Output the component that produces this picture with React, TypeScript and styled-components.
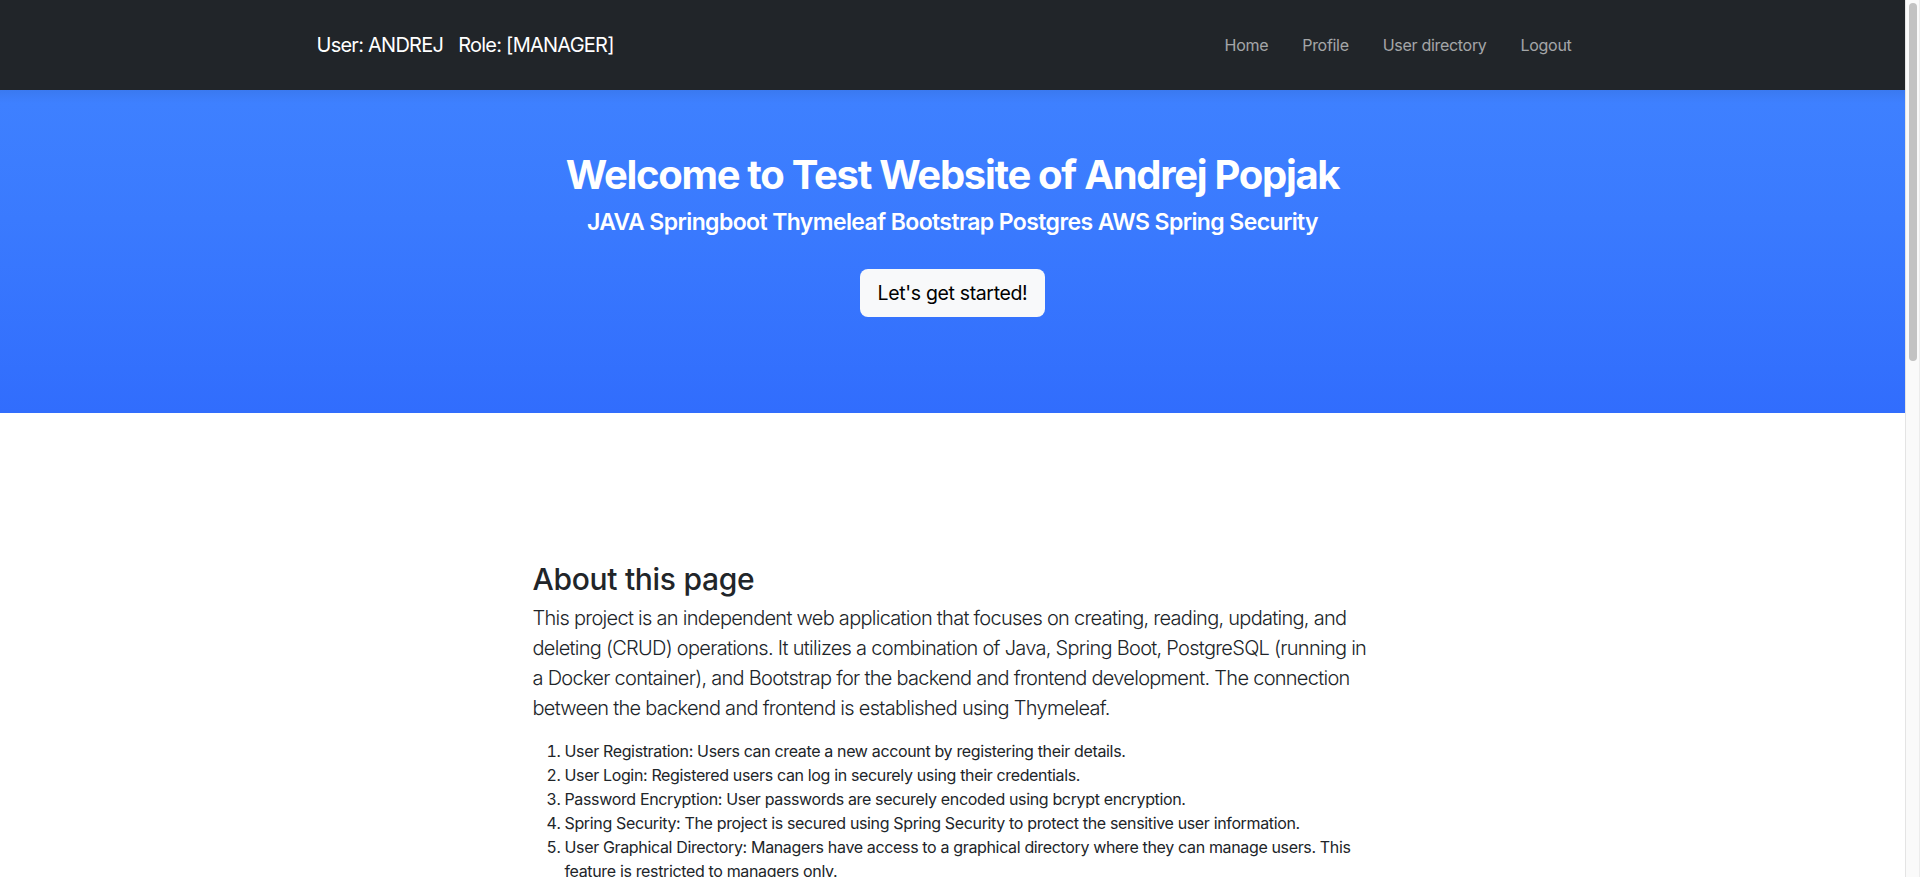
import React from "react";
import styled, { createGlobalStyle } from "styled-components";

const GlobalStyle = createGlobalStyle`
  html, body {
    margin: 0;
    padding: 0;
    height: 100%;
    overflow: hidden;
    background: #ffffff;
  }
  body {
    font-family: Inter, "Noto Sans", "Liberation Sans", sans-serif;
    color: #212529;
    -webkit-font-smoothing: antialiased;
  }
  * { box-sizing: border-box; }
`;

const Frame = styled.div`
  display: flex;
  height: 100vh;
  width: 100vw;
`;

const Viewport = styled.div`
  flex: 1;
  min-width: 0;
  overflow: hidden;
`;

const ScrollTrack = styled.div`
  width: 15px;
  flex: 0 0 15px;
  background: #fafafa;
  border-left: 1px solid #e4e4e4;
  border-right: 1px solid #ececec;
  display: flex;
  justify-content: center;
  padding-top: 3px;
`;

const ScrollThumb = styled.div`
  width: 8px;
  height: 358px;
  border-radius: 4px;
  background: #c2c2c2;
`;

const NavBar = styled.nav`
  height: 90px;
  background: #212529;
  display: flex;
  align-items: center;
`;

const Container = styled.div<{ $width: number }>`
  width: ${(p) => p.$width}px;
  margin: 0 auto;
`;

const NavInner = styled(Container)`
  display: flex;
  align-items: center;
  justify-content: space-between;
`;

const Brand = styled.div`
  display: flex;
  gap: 15px;
  color: #ffffff;
  font-size: 20px;
  letter-spacing: -0.75px;
  line-height: 30px;
`;

const NavList = styled.ul`
  display: flex;
  list-style: none;
  margin: 0;
  padding: 0;
`;

const NavLink = styled.li`
  padding: 8px 17px;
  font-size: 16px;
  line-height: 24px;
  letter-spacing: -0.3px;
  color: rgba(255, 255, 255, 0.6);
`;

const Hero = styled.header`
  height: 323px;
  background: linear-gradient(180deg, #3a79f0 0%, #3e80ff 4%, #3a7afe 40%, #316dfd 100%);
  display: flex;
  flex-direction: column;
  align-items: center;
  padding-top: 61px;
  color: #ffffff;
`;

const Title = styled.h1`
  margin: 0 0 9px;
  font-size: 40px;
  line-height: 48px;
  font-weight: 700;
  letter-spacing: -1.3px;
`;

const Subtitle = styled.h4`
  margin: 0 0 32px;
  font-size: 23px;
  line-height: 29px;
  font-weight: 600;
  letter-spacing: -0.6px;
`;

const StartButton = styled.button`
  font-family: inherit;
  height: 48px;
  padding: 0 18px;
  font-size: 19.5px;
  letter-spacing: -0.35px;
  color: #000000;
  background: #f8f9fa;
  border: none;
  border-radius: 8px;
`;

const About = styled.section`
  padding-top: 148px;
  padding-bottom: 80px;
`;

const Heading = styled.h2`
  margin: 0 0 6px;
  font-size: 30px;
  line-height: 36px;
  font-weight: 500;
  letter-spacing: -0.3px;
`;

const Lead = styled.p`
  margin: 0 0 16px;
  font-size: 20px;
  line-height: 30px;
  font-weight: 300;
  letter-spacing: -0.72px;
`;

const Features = styled.ol`
  margin: 0 0 16px;
  padding-left: 32px;
  font-size: 16px;
  line-height: 24px;
  letter-spacing: -0.35px;
`;

const features = [
  "User Registration: Users can create a new account by registering their details.",
  "User Login: Registered users can log in securely using their credentials.",
  "Password Encryption: User passwords are securely encoded using bcrypt encryption.",
  "Spring Security: The project is secured using Spring Security to protect the sensitive user information.",
  "User Graphical Directory: Managers have access to a graphical directory where they can manage users. This feature is restricted to managers only.",
];

export default function App() {
  return (
    <>
      <GlobalStyle />
      <Frame>
        <Viewport>
          <NavBar>
            <NavInner $width={1272}>
              <Brand>
                <span>User: ANDREJ</span>
                <span>Role: [MANAGER]</span>
              </Brand>
              <NavList>
                <NavLink>Home</NavLink>
                <NavLink>Profile</NavLink>
                <NavLink>User directory</NavLink>
                <NavLink>Logout</NavLink>
              </NavList>
            </NavInner>
          </NavBar>
          <Hero>
            <Title>Welcome to Test Website of Andrej Popjak</Title>
            <Subtitle>JAVA Springboot Thymeleaf Bootstrap Postgres AWS Spring Security</Subtitle>
            <StartButton>Let's get started!</StartButton>
          </Hero>
          <About>
            <Container $width={840}>
              <Heading>About this page</Heading>
              <Lead>
                This project is an independent web application that focuses on creating, reading,
                updating, and deleting (CRUD) operations. It utilizes a combination of Java, Spring
                Boot, PostgreSQL (running in a Docker container), and Bootstrap for the backend and
                frontend development. The connection between the backend and frontend is established
                using Thymeleaf.
              </Lead>
              <Features>
                {features.map((f) => (
                  <li key={f}>{f}</li>
                ))}
              </Features>
            </Container>
          </About>
        </Viewport>
        <ScrollTrack>
          <ScrollThumb />
        </ScrollTrack>
      </Frame>
    </>
  );
}
